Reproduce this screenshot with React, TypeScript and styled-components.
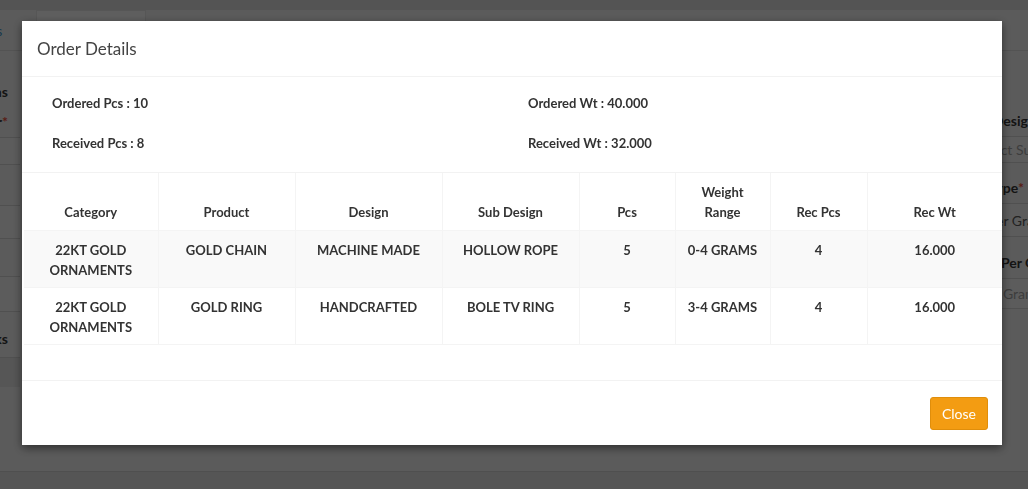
import styled, { createGlobalStyle } from "styled-components";

const GlobalStyle = createGlobalStyle`
  html, body {
    margin: 0;
    padding: 0;
    height: 100%;
    overflow: hidden;
  }
  body {
    font-family: Lato, "Open Sans", "Liberation Sans", sans-serif;
    color: #333;
    background: #e4e4e4;
  }
  * {
    box-sizing: border-box;
  }
`;

/* ---------- page behind the modal ---------- */

const Page = styled.div`
  height: 489px;
  display: flex;
  flex-direction: column;
  background: #e4e4e4;
  overflow: hidden;
`;

const TopStrip = styled.div`
  height: 10px;
  background: #d2d2d2;
`;

const TabBar = styled.div`
  height: 41px;
  display: flex;
  align-items: flex-end;
  gap: 18px;
  border-bottom: 1px solid #cfcfcf;
  margin-left: -56px;
`;

const TabLink = styled.div<{ active?: boolean }>`
  height: 40px;
  padding: 0 15px;
  display: flex;
  align-items: center;
  font-size: 14px;
  color: #3c8dbc;
  background: ${(p) => (p.active ? "#ececec" : "transparent")};
  border: 1px solid ${(p) => (p.active ? "#d8d8d8" : "transparent")};
  border-bottom: none;
  width: ${(p) => (p.active ? "110px" : "auto")};
`;

const FormArea = styled.div`
  flex: 1;
  display: grid;
  grid-template-columns: 140px 1fr 90px;
  margin-left: -120px;
`;

const FormColumn = styled.div<{ top: number }>`
  display: flex;
  flex-direction: column;
  padding-top: ${(p) => p.top}px;
  min-width: 0;
`;

const FieldLabel = styled.div<{ right?: boolean; indent?: number; gap?: number }>`
  font-size: 14px;
  font-weight: 700;
  color: #333;
  height: 30px;
  line-height: 30px;
  white-space: nowrap;
  margin-top: ${(p) => p.gap ?? 0}px;
  padding: 0 12px 0 ${(p) => p.indent ?? 12}px;
  text-align: ${(p) => (p.right ? "right" : "left")};
  span {
    color: #dd4b39;
  }
`;

const FieldInput = styled.div<{ h: number; indent?: number; gap?: number; filled?: boolean }>`
  height: ${(p) => p.h}px;
  border-top: 1px solid #c8c8c8;
  border-bottom: 1px solid #c8c8c8;
  font-size: 14px;
  color: ${(p) => (p.filled ? "#555" : "#999")};
  white-space: nowrap;
  display: flex;
  align-items: center;
  padding-left: ${(p) => p.indent ?? 12}px;
  background: #e6e6e6;
  margin-top: ${(p) => p.gap ?? 0}px;
`;

const Band = styled.div`
  height: 30px;
  background: #d6d6d6;
  border-top: 1px solid #c8c8c8;
  margin-top: 3px;
`;

const FooterStrip = styled.div`
  height: 18px;
  background: #d4d4d4;
  border-top: 1px solid #c6c6c6;
`;

/* ---------- modal ---------- */

const Backdrop = styled.div`
  position: fixed;
  inset: 0;
  background: rgba(0, 0, 0, 0.6);
`;

const Dialog = styled.div`
  position: fixed;
  top: 21px;
  left: 22px;
  width: 980px;
  background: #fff;
  box-shadow: 0 3px 9px rgba(0, 0, 0, 0.5);
  display: flex;
  flex-direction: column;
`;

const DialogHeader = styled.div`
  height: 56px;
  padding: 0 15px;
  display: flex;
  align-items: center;
  border-bottom: 1px solid #f2f2f2;
`;

const DialogTitle = styled.h4`
  margin: 0;
  font-size: 17px;
  font-weight: 400;
  color: #444;
`;

const DialogBody = styled.div`
  padding: 0 0 35px 2px;
  border-bottom: 1px solid #f2f2f2;
`;

const InfoGrid = styled.div`
  display: grid;
  grid-template-columns: 476px 1fr;
  row-gap: 20px;
  padding: 16px 15px 19px 30px;
  border-bottom: 1px solid #f2f2f2;
  margin-left: -2px;
`;

const InfoItem = styled.div`
  font-size: 13px;
  font-weight: 700;
  line-height: 20px;
  color: #333;
`;

const Table = styled.table`
  width: 100%;
  border-collapse: collapse;
  table-layout: fixed;
`;

const HeadCell = styled.th<{ w: number }>`
  width: ${(p) => p.w}px;
  padding: 9px 8px 8px;
  font-size: 13px;
  font-weight: 700;
  line-height: 20px;
  text-align: center;
  vertical-align: bottom;
  color: #333;
  border-left: 1px solid #f4f4f4;
  &:first-child {
    border-left: none;
  }
`;

const Row = styled.tr<{ striped?: boolean }>`
  background: ${(p) => (p.striped ? "#f9f9f9" : "#fff")};
  border-top: 1px solid #f4f4f4;
  border-bottom: 1px solid #f4f4f4;
`;

const Cell = styled.td`
  padding: 9px 8px 7px;
  font-size: 13px;
  font-weight: 700;
  line-height: 20px;
  text-align: center;
  vertical-align: top;
  text-transform: uppercase;
  color: #333;
  border-left: 1px solid #f4f4f4;
  &:first-child {
    border-left: none;
  }
`;

const DialogFooter = styled.div`
  height: 64px;
  padding: 0 14px;
  display: flex;
  align-items: center;
  justify-content: flex-end;
`;

const CloseButton = styled.button`
  height: 33px;
  padding: 0 11px;
  background: #f39c12;
  border: 1px solid #e08e0b;
  border-radius: 3px;
  color: #fff;
  font-family: inherit;
  font-size: 14px;
  cursor: pointer;
`;

const columns = [
  { label: "Category", w: 134 },
  { label: "Product", w: 137 },
  { label: "Design", w: 147 },
  { label: "Sub Design", w: 137 },
  { label: "Pcs", w: 96 },
  { label: "Weight Range", w: 95 },
  { label: "Rec Pcs", w: 97 },
  { label: "Rec Wt", w: 135 },
];

const rows = [
  ["22kt Gold Ornaments", "Gold Chain", "Machine Made", "Hollow Rope", "5", "0-4 Grams", "4", "16.000"],
  ["22kt Gold Ornaments", "Gold Ring", "Handcrafted", "Bole TV Ring", "5", "3-4 Grams", "4", "16.000"],
];

export default function App() {
  return (
    <>
      <GlobalStyle />
      <Page>
        <TopStrip />
        <TabBar>
          <TabLink>Orders</TabLink>
          <TabLink active>Add Order</TabLink>
        </TabBar>
        <FormArea>
          <FormColumn top={26}>
            <FieldLabel right>Items</FieldLabel>
            <FieldLabel right>
              Order Number<span>*</span>
            </FieldLabel>
            <FieldInput h={28} />
            <FieldInput h={34} gap={40} />
            <FieldInput h={36} gap={37} />
            <FieldLabel right gap={12}>
              Remarks
            </FieldLabel>
            <Band />
          </FormColumn>
          <div />
          <FormColumn top={55}>
            <FieldLabel indent={28}>Sub Design</FieldLabel>
            <FieldInput h={27} indent={37}>
              Select Sub Design
            </FieldInput>
            <FieldLabel indent={2} gap={10}>
              Weight Type<span>*</span>
            </FieldLabel>
            <FieldInput h={34} indent={50} filled>
              Per Gram
            </FieldInput>
            <FieldLabel indent={31} gap={11}>
              Rate Per Gram
            </FieldLabel>
            <FieldInput h={31} indent={65}>
              Gram
            </FieldInput>
          </FormColumn>
        </FormArea>
        <FooterStrip />
      </Page>

      <Backdrop />
      <Dialog>
        <DialogHeader>
          <DialogTitle>Order Details</DialogTitle>
        </DialogHeader>
        <DialogBody>
          <InfoGrid>
            <InfoItem>Ordered Pcs : 10</InfoItem>
            <InfoItem>Ordered Wt : 40.000</InfoItem>
            <InfoItem>Received Pcs : 8</InfoItem>
            <InfoItem>Received Wt : 32.000</InfoItem>
          </InfoGrid>
          <Table>
            <thead>
              <tr>
                {columns.map((c) => (
                  <HeadCell key={c.label} w={c.w}>
                    {c.label === "Weight Range" ? (
                      <>
                        Weight
                        <br />
                        Range
                      </>
                    ) : (
                      c.label
                    )}
                  </HeadCell>
                ))}
              </tr>
            </thead>
            <tbody>
              {rows.map((r, i) => (
                <Row key={i} striped={i % 2 === 0}>
                  {r.map((v, j) => (
                    <Cell key={j}>{v}</Cell>
                  ))}
                </Row>
              ))}
            </tbody>
          </Table>
        </DialogBody>
        <DialogFooter>
          <CloseButton>Close</CloseButton>
        </DialogFooter>
      </Dialog>
    </>
  );
}
